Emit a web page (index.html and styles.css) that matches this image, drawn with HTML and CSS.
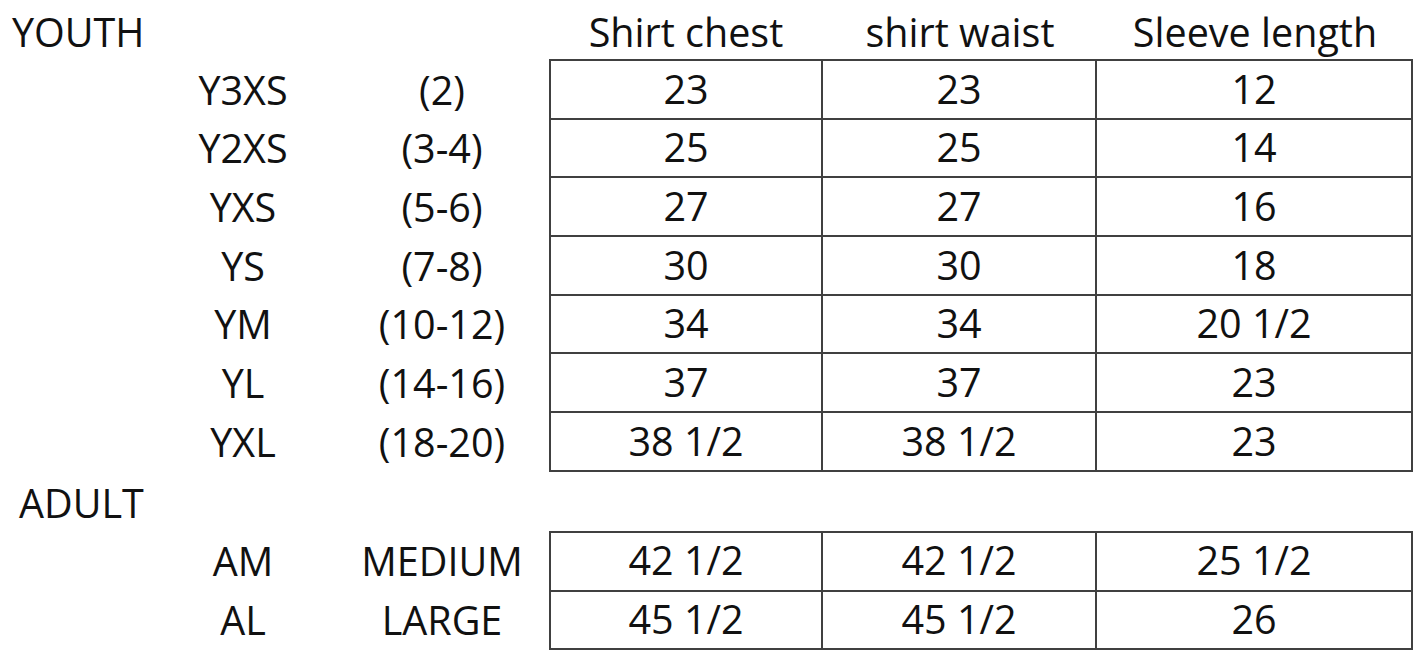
FILE: index.html
```html
<!DOCTYPE html>
<html lang="en">
<head>
<meta charset="utf-8">
<title>Size chart</title>
<link rel="stylesheet" href="styles.css">
</head>
<body>
<div class="page">
  <div class="head">
    <div class="section-label youth">YOUTH</div>
    <div class="col-heads">
      <div>Shirt chest</div>
      <div>shirt waist</div>
      <div>Sleeve length</div>
    </div>
  </div>

  <div class="block">
    <div class="labels">
      <span></span><span>Y3XS</span><span>(2)</span>
      <span></span><span>Y2XS</span><span>(3-4)</span>
      <span></span><span>YXS</span><span>(5-6)</span>
      <span></span><span>YS</span><span>(7-8)</span>
      <span></span><span>YM</span><span>(10-12)</span>
      <span></span><span>YL</span><span>(14-16)</span>
      <span></span><span>YXL</span><span>(18-20)</span>
    </div>
    <table class="chart">
      <tr><td>23</td><td>23</td><td>12</td></tr>
      <tr><td>25</td><td>25</td><td>14</td></tr>
      <tr><td>27</td><td>27</td><td>16</td></tr>
      <tr><td>30</td><td>30</td><td>18</td></tr>
      <tr><td>34</td><td>34</td><td>20 1/2</td></tr>
      <tr><td>37</td><td>37</td><td>23</td></tr>
      <tr><td>38 1/2</td><td>38 1/2</td><td>23</td></tr>
    </table>
  </div>

  <div class="section-label adult">ADULT</div>

  <div class="block">
    <div class="labels">
      <span></span><span>AM</span><span>MEDIUM</span>
      <span></span><span>AL</span><span>LARGE</span>
    </div>
    <table class="chart">
      <tr><td>42 1/2</td><td>42 1/2</td><td>25 1/2</td></tr>
      <tr><td>45 1/2</td><td>45 1/2</td><td>26</td></tr>
    </table>
  </div>
</div>
</body>
</html>
```

FILE: styles.css
```css
html, body {
  margin: 0;
  padding: 0;
  background: #ffffff;
}

body {
  font-family: "Open Sans", "Liberation Sans", sans-serif;
  font-size: 39.5px;
  color: #111111;
  line-height: 1;
}

.page {
  width: 1417px;
}

.head {
  display: flex;
  height: 59px;
}

.section-label {
  display: flex;
  align-items: center;
  height: 59px;
  box-sizing: border-box;
}

.youth {
  width: 549px;
  padding-left: 12px;
  padding-top: 6px;
}

.adult {
  padding-left: 19px;
  padding-top: 4px;
}

.col-heads {
  display: grid;
  grid-template-columns: 274px 274px 316px;
  align-items: center;
  text-align: center;
  padding-top: 6px;
}

.block {
  display: flex;
}

.labels {
  width: 549px;
  display: grid;
  grid-template-columns: 143px 200px 198px;
  grid-auto-rows: 58.7px;
  align-items: center;
  justify-items: center;
  padding-top: 2px;
  box-sizing: border-box;
}

.chart {
  border-spacing: 0;
  border-top: 2px solid #404040;
  border-left: 2px solid #404040;
  table-layout: fixed;
}

.chart td {
  padding: 0;
  height: 56.7px;
  border-right: 2px solid #404040;
  border-bottom: 2px solid #404040;
  text-align: center;
  vertical-align: middle;
}

.chart td:nth-child(1) { width: 270px; }
.chart td:nth-child(2) { width: 272px; }
.chart td:nth-child(3) { width: 314px; }
```
